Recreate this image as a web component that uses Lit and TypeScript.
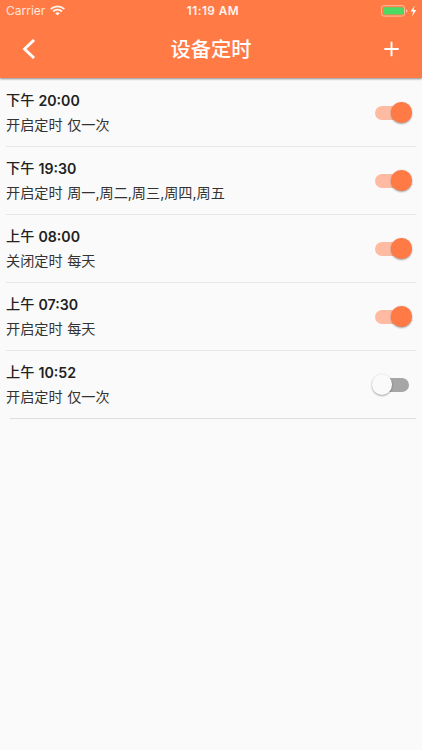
import { LitElement, html, css } from "lit";
import { customElement, property, state } from "lit/decorators.js";
import { classMap } from "lit/directives/class-map.js";

interface Timer {
  period: string;
  time: string;
  action: string;
  repeat: string;
  on: boolean;
}

@customElement("timer-switch")
export class TimerSwitch extends LitElement {
  @property({ type: Boolean }) on = false;

  static styles = css`
    :host { display: block; flex: none; }
    .track {
      display: flex;
      align-items: center;
      width: 33.5px;
      height: 14px;
      border-radius: 7px;
      background: #a6a6a6;
    }
    .thumb {
      flex: none;
      width: 20.4px;
      height: 20.4px;
      margin-left: -3px;
      border-radius: 50%;
      background: #fafafa;
      box-shadow: 0 1px 2px rgba(0, 0, 0, 0.26), 0 0.5px 2px rgba(0, 0, 0, 0.16);
    }
    .track.on { background: #ffbba2; justify-content: flex-end; }
    .on .thumb { background: #ff7a45; margin: 0 -3px 0 0; }
  `;

  render() {
    return html`<div class=${classMap({ track: true, on: this.on })} role="switch" aria-checked=${this.on}>
      <div class="thumb"></div>
    </div>`;
  }
}

@customElement("app-root")
export class AppRoot extends LitElement {
  @state() private timers: Timer[] = [
    { period: "下午", time: "20:00", action: "开启定时", repeat: "仅一次", on: true },
    { period: "下午", time: "19:30", action: "开启定时", repeat: "周一,周二,周三,周四,周五", on: true },
    { period: "上午", time: "08:00", action: "关闭定时", repeat: "每天", on: true },
    { period: "上午", time: "07:30", action: "开启定时", repeat: "每天", on: true },
    { period: "上午", time: "10:52", action: "开启定时", repeat: "仅一次", on: false },
  ];

  static styles = css`
    :host {
      display: block;
      height: 750px;
      background: #fafafa;
      color: #212121;
      font-family: Inter, "Noto Sans CJK SC", sans-serif;
    }
    .header {
      height: 77.5px;
      background: #ff7a45;
      color: #fff;
      box-shadow: 0 1px 2px rgba(0, 0, 0, 0.45);
    }
    .status, .bar {
      display: grid;
      grid-template-columns: 1fr auto 1fr;
      align-items: center;
    }
    .status { height: 21px; padding: 0 5px 0 6px; font-size: 12px; line-height: 21px; }
    .left { display: flex; align-items: center; gap: 5px; color: #ffe6dc; }
    .clock { font-weight: 600; font-size: 11.8px; letter-spacing: 0.45px; line-height: 19px; padding-top: 2px; color: #fff3ed; margin-left: 3px; }
    .right { display: flex; justify-content: flex-end; }
    .bar { height: 56px; padding: 0 22px; }
    .title { font-size: 20.2px; font-weight: 500; line-height: 28px; padding-top: 2px; }
    .plus { justify-self: end; }
    svg { display: block; }
    .row {
      display: flex;
      align-items: center;
      justify-content: space-between;
      box-sizing: border-box;
      height: 68px;
      margin: 0 6px;
      padding: 0 7.5px 0 0;
      border-bottom: 1px solid #e9e5e9;
    }
    .list { padding-top: 1.5px; }
    .row:last-child { margin-left: 10px; border-bottom-color: #dedee0; }
    .row:last-child .text { margin-left: -4px; }
    .time, .detail { height: 25px; line-height: 25px; font-size: 14.15px; white-space: nowrap; word-spacing: 0.6px; }
    .time { font-weight: 600; }
    .period { font-weight: 500; line-height: 1; vertical-align: 1px; }
    .detail { color: #333; line-height: 23px; }
  `;

  render() {
    return html`
      <div class="header">
        <div class="status">
          <div class="left">
            <span>Carrier</span>
            <svg width="15" height="11" viewBox="0 0 15 11" fill="none" stroke="#fff3ed" stroke-width="1.8">
              <path d="M.7 4.1a9.6 9.6 0 0 1 13.6 0M3.1 6.5a6.2 6.2 0 0 1 8.8 0" />
              <path d="M7.5 10.6 5.2 8.3a3.3 3.3 0 0 1 4.6 0Z" fill="#fff3ed" stroke="none" />
            </svg>
          </div>
          <span class="clock">11:19 AM</span>
          <div class="right">
            <svg width="37" height="12" viewBox="0 0 37 12">
              <rect x="1.5" y=".7" width="23" height="10.4" rx="2.4" fill="none" stroke="#ffc09f" />
              <rect x="3" y="2.2" width="20" height="7.4" rx="1.2" fill="#4cd964" />
              <path d="M26 4.2q1.6.6 1.6 1.7T26 7.6Z" fill="#ffc09f" />
              <path d="M34.6.8 30.6 6.6h2.5l-.8 4.4 4-5.9h-2.6Z" fill="#fff" />
            </svg>
          </div>
        </div>
        <div class="bar">
          <svg width="14" height="20" viewBox="0 0 14 20" fill="none" stroke="#fff" stroke-width="2.9">
            <path d="M12 1 2.6 10l9.4 9" />
          </svg>
          <span class="title">设备定时</span>
          <svg class="plus" width="16" height="16" viewBox="0 0 16 16" stroke="#fff" stroke-width="1.9">
            <path d="M7.5.8v14.4M.3 8h14.4" />
          </svg>
        </div>
      </div>
      <div class="list">
        ${this.timers.map(
          (t) => html`<div class="row">
            <div class="text">
              <div class="time"><span class="period">${t.period}</span> ${t.time}</div>
              <div class="detail">${t.action} ${t.repeat}</div>
            </div>
            <timer-switch .on=${t.on}></timer-switch>
          </div>`
        )}
      </div>
    `;
  }
}
